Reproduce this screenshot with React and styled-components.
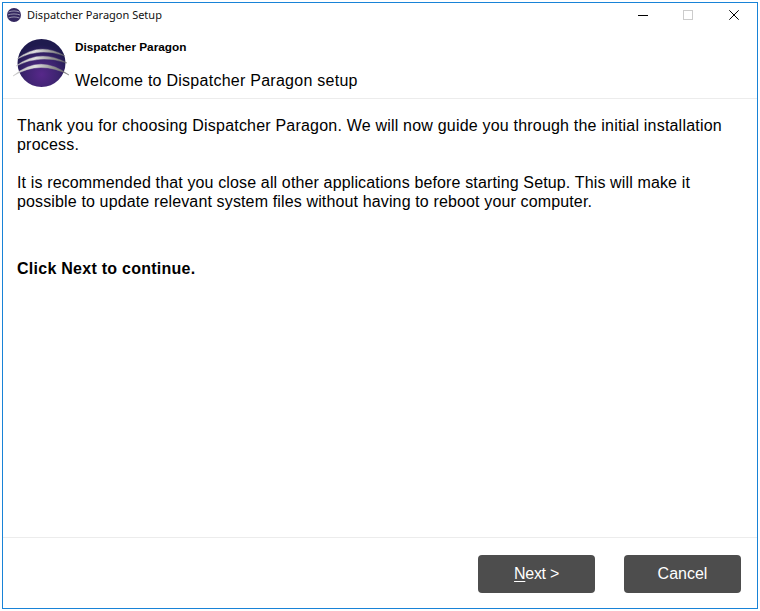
import React from 'react';
import styled, { createGlobalStyle } from 'styled-components';

const GlobalStyle = createGlobalStyle`
  html, body {
    margin: 0;
    padding: 0;
    background: #fff;
  }
  body {
    font-family: "Liberation Sans", Arial, sans-serif;
  }
`;

const Page = styled.div`
  width: 760px;
  height: 611px;
  padding: 2px;
  box-sizing: border-box;
  background: #fff;
`;

const Window = styled.div`
  height: 100%;
  box-sizing: border-box;
  border: 1px solid #1883d7;
  display: flex;
  flex-direction: column;
`;

const TitleBar = styled.div`
  height: 24px;
  display: flex;
  align-items: center;
  padding-left: 4px;
  flex-shrink: 0;
`;

const TitleText = styled.span`
  margin: 0 0 2px 4px;
  font-family: "Noto Sans", sans-serif;
  font-size: 11px;
  color: #111;
`;

const WindowControls = styled.div`
  margin-left: auto;
  display: flex;
`;

const ControlButton = styled.div`
  width: 46px;
  height: 24px;
  display: flex;
  align-items: center;
  justify-content: center;
`;

const Header = styled.div`
  height: 71px;
  flex-shrink: 0;
  display: flex;
  border-bottom: 1px solid #ececec;
  padding-left: 9px;
`;

const LogoMark = styled.svg`
  flex-shrink: 0;
  margin-top: 9px;
`;

const HeaderText = styled.div`
  margin-left: 3px;
  display: flex;
  flex-direction: column;
`;

const ProductName = styled.div`
  margin-top: 13px;
  font-size: 11.8px;
  font-weight: bold;
  line-height: 14px;
  color: #000;
`;

const Welcome = styled.div`
  margin-top: 18px;
  font-size: 16px;
  line-height: 18px;
  letter-spacing: 0.26px;
  color: #000;
`;

const Content = styled.div`
  flex: 1;
  padding: 17px 14px 0;
  font-size: 16px;
  line-height: 19px;
  color: #000;
`;

const Paragraph = styled.p`
  margin: 0 0 19px;
  letter-spacing: ${props => props.$tracking}px;
`;

const Continue = styled.p`
  margin: 48px 0 0;
  font-weight: bold;
  letter-spacing: 0.26px;
`;

const Footer = styled.div`
  height: 71px;
  box-sizing: border-box;
  flex-shrink: 0;
  border-top: 1px solid #ececec;
  display: flex;
  justify-content: flex-end;
  align-items: flex-start;
  gap: 29px;
  padding: 17px 16px 0 0;
`;

const ActionButton = styled.button`
  width: 117px;
  height: 38px;
  border: none;
  border-radius: 4px;
  background: #4d4d4d;
  color: #fff;
  font-family: "Liberation Sans", Arial, sans-serif;
  font-size: 16px;
  padding: 0;
  letter-spacing: ${props => props.$tracking || 0}px;
  u {
    text-underline-offset: 2px;
  }
`;

const MiniLogo = () => (
  <svg width="16" height="16" viewBox="0 0 16 16">
    <circle cx="7" cy="8" r="7" fill="#33265f" />
    <path d="M1.5 5c3-1.4 8-1.4 11 0M0.8 8c3.4-1.4 9-1.4 12.4 0M1.5 11c3-1.4 8-1.4 11 0" stroke="#9a96b0" strokeWidth="1" fill="none" />
  </svg>
);

const Swoosh = ({ d }) => <path d={d} fill="url(#swoosh)" stroke="url(#swoosh)" strokeWidth="0.4" />;

const Logo = () => (
  <LogoMark width="60" height="54" viewBox="12 36 60 54">
    <defs>
      <radialGradient id="ball" cx="50%" cy="74%" r="62%">
        <stop offset="0%" stopColor="#57288a" />
        <stop offset="55%" stopColor="#3d2470" />
        <stop offset="100%" stopColor="#1f1a4e" />
      </radialGradient>
      <linearGradient id="swoosh" gradientUnits="userSpaceOnUse" x1="13" x2="70" y1="0" y2="0">
        <stop offset="0%" stopColor="#bdbdbd" />
        <stop offset="40%" stopColor="#dedede" />
        <stop offset="72%" stopColor="#8e8e8e" />
        <stop offset="100%" stopColor="#5e5e5e" />
      </linearGradient>
    </defs>
    <circle cx="41.5" cy="63" r="24" fill="url(#ball)" />
    <Swoosh d="M17 59Q40 41 65 56Q40 46.5 17 59Z" />
    <Swoosh d="M16 66Q40 48 67 63Q40 53.5 16 66Z" />
    <Swoosh d="M13 76Q40 53 69 75Q40 59.5 13 76Z" />
  </LogoMark>
);

const App = () => (
  <>
    <GlobalStyle />
    <Page>
      <Window>
        <TitleBar>
          <MiniLogo />
          <TitleText>Dispatcher Paragon Setup</TitleText>
          <WindowControls>
            <ControlButton>
              <svg width="12" height="10" viewBox="0 0 12 10">
                <path d="M2 5.5h10" stroke="#000" strokeWidth="1" />
              </svg>
            </ControlButton>
            <ControlButton>
              <svg width="10" height="10" viewBox="0 0 10 10">
                <rect x="0.5" y="0.5" width="9" height="9" fill="none" stroke="#ccc" strokeWidth="1" />
              </svg>
            </ControlButton>
            <ControlButton>
              <svg width="10" height="10" viewBox="0 0 10 10">
                <path d="M0.3 0.3l9.4 9.4M9.7 0.3l-9.4 9.4" stroke="#000" strokeWidth="1" />
              </svg>
            </ControlButton>
          </WindowControls>
        </TitleBar>
        <Header>
          <Logo />
          <HeaderText>
            <ProductName>Dispatcher Paragon</ProductName>
            <Welcome>Welcome to Dispatcher Paragon setup</Welcome>
          </HeaderText>
        </Header>
        <Content>
          <Paragraph $tracking={0.2}>
            Thank you for choosing Dispatcher Paragon. We will now guide you through the initial installation process.
          </Paragraph>
          <Paragraph $tracking={0.14}>
            It is recommended that you close all other applications before starting Setup. This will make it possible to update relevant system files without having to reboot your computer.
          </Paragraph>
          <Continue>Click Next to continue.</Continue>
        </Content>
        <Footer>
          <ActionButton $tracking={-0.3}><u>N</u>ext &gt;</ActionButton>
          <ActionButton>Cancel</ActionButton>
        </Footer>
      </Window>
    </Page>
  </>
);

export default App;
